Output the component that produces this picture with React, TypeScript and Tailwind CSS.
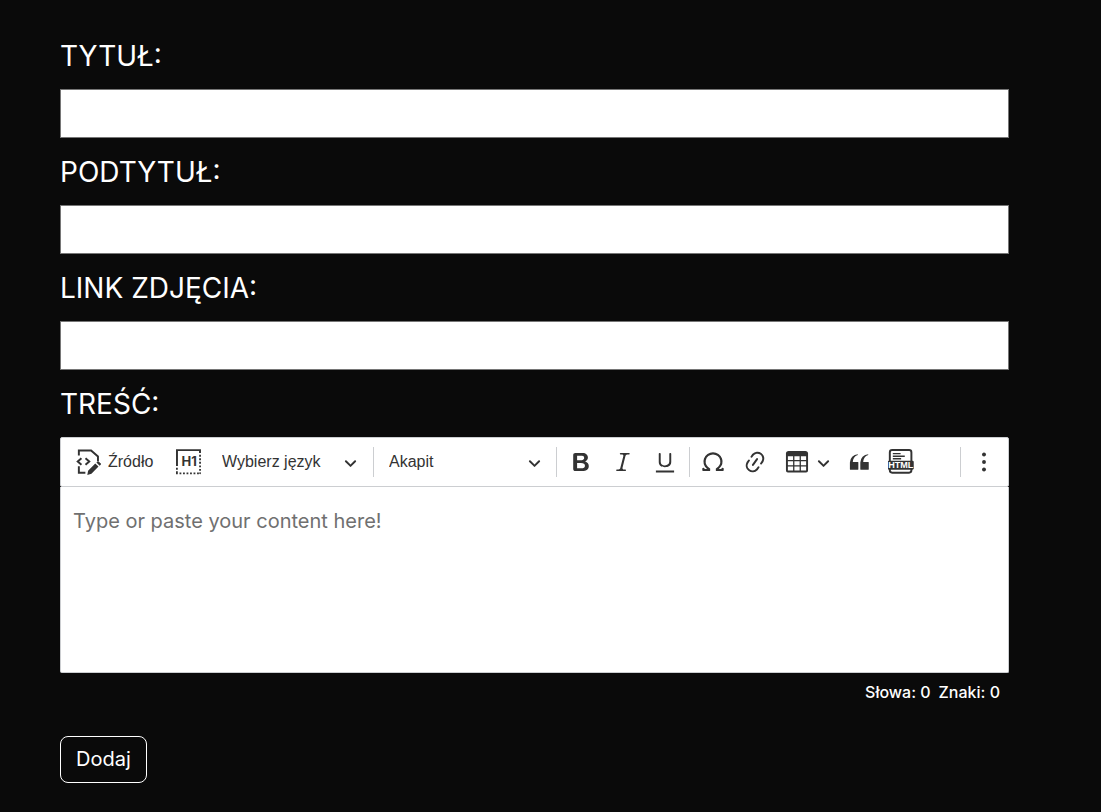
import type { ReactNode } from "react";

function Icon({ children }: { children: ReactNode }) {
  return (
    <svg viewBox="0 0 20 20" className="size-[26px] shrink-0 fill-current" aria-hidden="true">
      {children}
    </svg>
  );
}

function Arrow({ className }: { className: string }) {
  return (
    <svg viewBox="0 0 10 10" className={`size-[13px] fill-current pointer-events-none ${className}`} aria-hidden="true">
      <path d="M.941 4.523a.75.75 0 1 1 1.06-1.06l3.006 3.005 3.005-3.005a.75.75 0 1 1 1.06 1.06l-3.549 3.55a.75.75 0 0 1-1.168-.136L.941 4.523z" />
    </svg>
  );
}

function ToolButton({ label, children }: { label: string; children: ReactNode }) {
  return (
    <button type="button" aria-label={label} className="flex h-10 w-[42px] shrink-0 items-center justify-center">
      <Icon>{children}</Icon>
    </button>
  );
}

function Separator() {
  return <span className="h-[30px] w-px shrink-0 bg-[#ccced1]" />;
}

function Picker({ label, options, className }: { label: string; options: string[]; className: string }) {
  return (
    <div className={`grid shrink-0 items-center ${className}`}>
      <select aria-label={label} className="col-start-1 row-start-1 h-10 w-full appearance-none bg-transparent text-base">
        {options.map((option) => (
          <option key={option}>{option}</option>
        ))}
      </select>
      <Arrow className="col-start-1 row-start-1 justify-self-end" />
    </div>
  );
}

function Field({ id, label }: { id: string; label: string }) {
  return (
    <div className="mb-3 flex flex-col">
      <label htmlFor={id} className="pb-[10px] text-[28px] leading-[45px]">
        {label}
      </label>
      <input id={id} type="text" className="h-[49px] w-full border border-[#767676] bg-white px-2 text-xl text-black" />
    </div>
  );
}

function Toolbar() {
  return (
    <div
      role="toolbar"
      aria-label="Pasek narzędzi edytora"
      className="flex h-[50px] items-center overflow-hidden rounded-[2px] border border-[#ccced1] bg-white pr-[3px] pl-[15px] font-['Liberation_Sans',Arial,sans-serif] text-base text-[#333333]"
    >
      <button type="button" className="flex h-10 shrink-0 items-center gap-[6px]">
        <Icon>
          <g fill="none" stroke="currentColor" strokeWidth="1.5">
            <path d="M2.2 5V1.1h9.4l5.3 4.6v3.7M2.2 13.3v4.9h5" />
            <path d="M4.2 7.1 1.3 9.6l2.9 2.5M7.3 7.1l2.9 2.5-2.9 2.5" />
          </g>
          <path d="m14.8 11.2 2.5 2.3-5.4 5.6-3.2.9.6-3.3zM15.7 10.4l.8-.8q.4-.4.9 0l1.7 1.6q.4.4 0 .8l-.9.9z" />
        </Icon>
        <span className="w-[46px] text-left">Źródło</span>
      </button>
      <div className="ml-[14px] flex">
        <ToolButton label="Pokaż bloki">
          <path d="M0 .1h19.2V3h-1.5V1.6H1.5V13H0z" />
          <g fill="none" stroke="currentColor" strokeWidth="1.4">
            <path d="M18.5 4.5v14.6" strokeDasharray="1.4 1.3" />
            <path d="M0 18.8h19.2M.7 14.5v4.5" strokeDasharray="1.4 1.3" />
          </g>
          <text x="10.1" y="13.1" textAnchor="middle" className="font-['Inter',sans-serif] text-[10px] font-bold">
            H1
          </text>
        </ToolButton>
      </div>
      <Picker label="Język" options={["Wybierz język"]} className="ml-3 w-[135px]" />
      <span className="w-4 shrink-0" />
      <Separator />
      <Picker label="Nagłówek" options={["Akapit", "Nagłówek 1", "Nagłówek 2"]} className="mr-[15px] ml-[15px] w-[152px]" />
      <Separator />
      <div className="mx-[3px] flex">
        <ToolButton label="Pogrubienie">
          <path d="M10.187 17H5.773c-.637 0-1.092-.138-1.364-.415-.273-.277-.409-.718-.409-1.323V4.738c0-.617.14-1.062.419-1.332.279-.27.73-.406 1.354-.406h4.68c.69 0 1.288.041 1.793.124.506.083.96.242 1.36.478.341.197.644.447.906.75a3.262 3.262 0 0 1 .808 2.162c0 1.401-.722 2.426-2.167 3.075C15.05 10.175 16 11.315 16 13.01a3.756 3.756 0 0 1-2.296 3.504 6.1 6.1 0 0 1-1.517.377c-.571.073-1.238.11-2 .11zm-.217-6.217H7v4.087h3.069c1.977 0 2.965-.69 2.965-2.072 0-.707-.256-1.22-.768-1.537-.512-.319-1.277-.478-2.296-.478zM7 5.13v3.619h2.606c.729 0 1.292-.067 1.69-.2a1.6 1.6 0 0 0 .91-.765c.165-.267.247-.566.247-.897 0-.707-.26-1.176-.778-1.409-.519-.232-1.31-.348-2.375-.348H7z" />
        </ToolButton>
        <ToolButton label="Kursywa">
          <path d="m9.586 14.633.021.004c-.036.335.095.655.393.962.082.083.173.15.274.201h1.474a.6.6 0 1 1 0 1.2H5.304a.6.6 0 0 1 0-1.2h1.15c.474-.07.809-.182 1.005-.334.157-.122.291-.32.404-.597l2.416-9.55a1.053 1.053 0 0 0-.281-.823 1.12 1.12 0 0 0-.442-.296H8.15a.6.6 0 0 1 0-1.2h6.443a.6.6 0 1 1 0 1.2h-1.195c-.376.056-.65.155-.823.296-.215.175-.423.439-.623.79l-2.366 9.347z" />
        </ToolButton>
        <ToolButton label="Podkreślenie">
          <path d="M3 18v-1.5h14V18zm2.2-8V3.6c0-.4.4-.6.8-.6.3 0 .7.2.7.6v6.2c0 2 1.3 2.8 3.2 2.8 1.9 0 3.4-.9 3.4-2.9V3.6c0-.3.4-.5.8-.5.3 0 .7.2.7.5V10c0 2.7-2.2 4-4.9 4-2.6 0-4.7-1.2-4.7-4z" />
        </ToolButton>
      </div>
      <Separator />
      <div className="mx-[2px] flex grow">
        <ToolButton label="Znaki specjalne">
          <path d="M10 2.5a7.47 7.47 0 0 1 4.231 1.31 7.268 7.268 0 0 1 2.703 3.454 7.128 7.128 0 0 1 .199 4.353c-.39 1.436-1.475 2.72-2.633 3.677h2.013c0-.226.092-.443.254-.603a.876.876 0 0 1 1.229 0c.163.16.254.377.254.603v.853c0 .209-.078.41-.22.567a.873.873 0 0 1-.547.28l-.101.006h-4.695a.517.517 0 0 1-.516-.518v-1.265c0-.21.128-.398.317-.489a5.601 5.601 0 0 0 2.492-2.371 5.459 5.459 0 0 0 .552-3.693 5.53 5.53 0 0 0-1.955-3.2A5.71 5.71 0 0 0 10 4.206 5.708 5.708 0 0 0 6.419 5.46 5.527 5.527 0 0 0 4.46 8.663a5.457 5.457 0 0 0 .554 3.695 5.6 5.6 0 0 0 2.497 2.37.55.55 0 0 1 .317.49v1.264c0 .286-.23.518-.516.518H2.618a.877.877 0 0 1-.614-.25.845.845 0 0 1-.254-.603v-.853c0-.226.091-.443.254-.603a.876.876 0 0 1 1.228 0c.163.16.255.377.255.603h1.925c-1.158-.958-2.155-2.241-2.545-3.678a7.128 7.128 0 0 1 .199-4.352 7.268 7.268 0 0 1 2.703-3.455A7.475 7.475 0 0 1 10 2.5z" />
        </ToolButton>
        <ToolButton label="Wstaw odnośnik">
          <path d="m11.077 15 .991-1.416a.75.75 0 1 1 1.229.86l-1.148 1.64a.748.748 0 0 1-.217.206 5.251 5.251 0 0 1-8.503-5.955.741.741 0 0 1 .12-.274l1.147-1.639a.75.75 0 1 1 1.228.86L4.933 10.7l.006.003a3.75 3.75 0 0 0 6.132 4.294l.006.004zm5.494-5.335a.748.748 0 0 1-.12.274l-1.147 1.639a.75.75 0 1 1-1.228-.86l.86-1.23a3.75 3.75 0 0 0-6.144-4.301l-.86 1.229a.75.75 0 0 1-1.229-.86l1.148-1.64a.748.748 0 0 1 .217-.206 5.251 5.251 0 0 1 8.503 5.955zm-4.563-2.532a.75.75 0 0 1 .184 1.045l-3.155 4.505a.75.75 0 1 1-1.229-.86l3.155-4.506a.75.75 0 0 1 1.045-.184z" />
        </ToolButton>
        <button type="button" aria-label="Wstaw tabelę" className="flex h-10 w-[62px] shrink-0 items-center gap-[7px] pl-2">
          <Icon>
            <path d="M3 5.5v3h4v-3H3Zm0 4v3h4v-3H3Zm0 4v3h4v-3H3Zm5 3h4v-3H8v3Zm5 0h4v-3h-4v3Zm4-4v-3h-4v3h4Zm0-4v-3h-4v3h4Zm1.5 8A1.5 1.5 0 0 1 17 18H3a1.5 1.5 0 0 1-1.5-1.5V3c.222-.863 1.068-1.5 2-1.5h13c.932 0 1.778.637 2 1.5v13.5Zm-6.5-4v-3H8v3h4Zm0-4v-3H8v3h4Z" />
          </Icon>
          <Arrow className="shrink-0" />
        </button>
        <ToolButton label="Cytat blokowy">
          <path d="M3 10.423a6.5 6.5 0 0 1 6.056-6.408l.038.67C6.448 5.423 5.354 7.663 5.22 10H9c.552 0 .5.432.5.986v4.511c0 .554-.448.503-1 .503h-5c-.552 0-.5-.449-.5-1.003v-4.574zm8 0a6.5 6.5 0 0 1 6.056-6.408l.038.67c-2.646.739-3.74 2.979-3.873 5.315H17c.552 0 .5.432.5.986v4.511c0 .554-.448.503-1 .503h-5c-.552 0-.5-.449-.5-1.003v-4.574z" />
        </ToolButton>
        <ToolButton label="Wstaw HTML">
          <rect x="1.4" y=".8" width="16.6" height="17.4" rx="1.8" fill="none" stroke="currentColor" strokeWidth="1.5" />
          <path d="M3.7 3h6v1.1h-6zM3.7 5h9.2v1.1H3.7zM3.7 7h6.4v1.1H3.7z" />
          <rect x="-.2" y="9" width="20" height="6.9" rx="1" />
          <text x="9.8" y="14.9" textAnchor="middle" className="fill-white font-['Liberation_Sans',Arial,sans-serif] text-[7px] font-bold">
            HTML
          </text>
        </ToolButton>
      </div>
      <Separator />
      <div className="ml-[2px] flex">
        <ToolButton label="Pokaż więcej elementów">
          <circle cx="10" cy="4.2" r="1.5" />
          <circle cx="10" cy="10" r="1.5" />
          <circle cx="10" cy="15.8" r="1.5" />
        </ToolButton>
      </div>
    </div>
  );
}

export default function App() {
  return (
    <main className="min-h-screen bg-[#0a0a0a] pt-[34px] pr-[92px] pb-7 pl-[60px] font-['Inter',sans-serif] text-white">
      <form>
        <Field id="title" label="TYTUŁ:" />
        <Field id="subtitle" label="PODTYTUŁ:" />
        <Field id="image" label="LINK ZDJĘCIA:" />
        <label htmlFor="content" className="block pb-[10px] text-[28px] leading-[45px]">
          TREŚĆ:
        </label>
        <Toolbar />
        <textarea
          id="content"
          placeholder="Type or paste your content here!"
          className="block h-[186px] w-full resize-none rounded-b-[2px] border border-t-0 border-[#ccced1] bg-white px-3 py-5 text-xl text-black placeholder:text-[#707070]"
        />
        <div className="mt-[7px] flex justify-end gap-2 pr-[9px] text-base font-medium">
          <span>Słowa: 0</span>
          <span>Znaki: 0</span>
        </div>
        <button type="submit" className="mt-8 h-[47px] rounded-lg border border-white px-[15px] pb-[2px] text-xl">
          Dodaj
        </button>
      </form>
    </main>
  );
}
